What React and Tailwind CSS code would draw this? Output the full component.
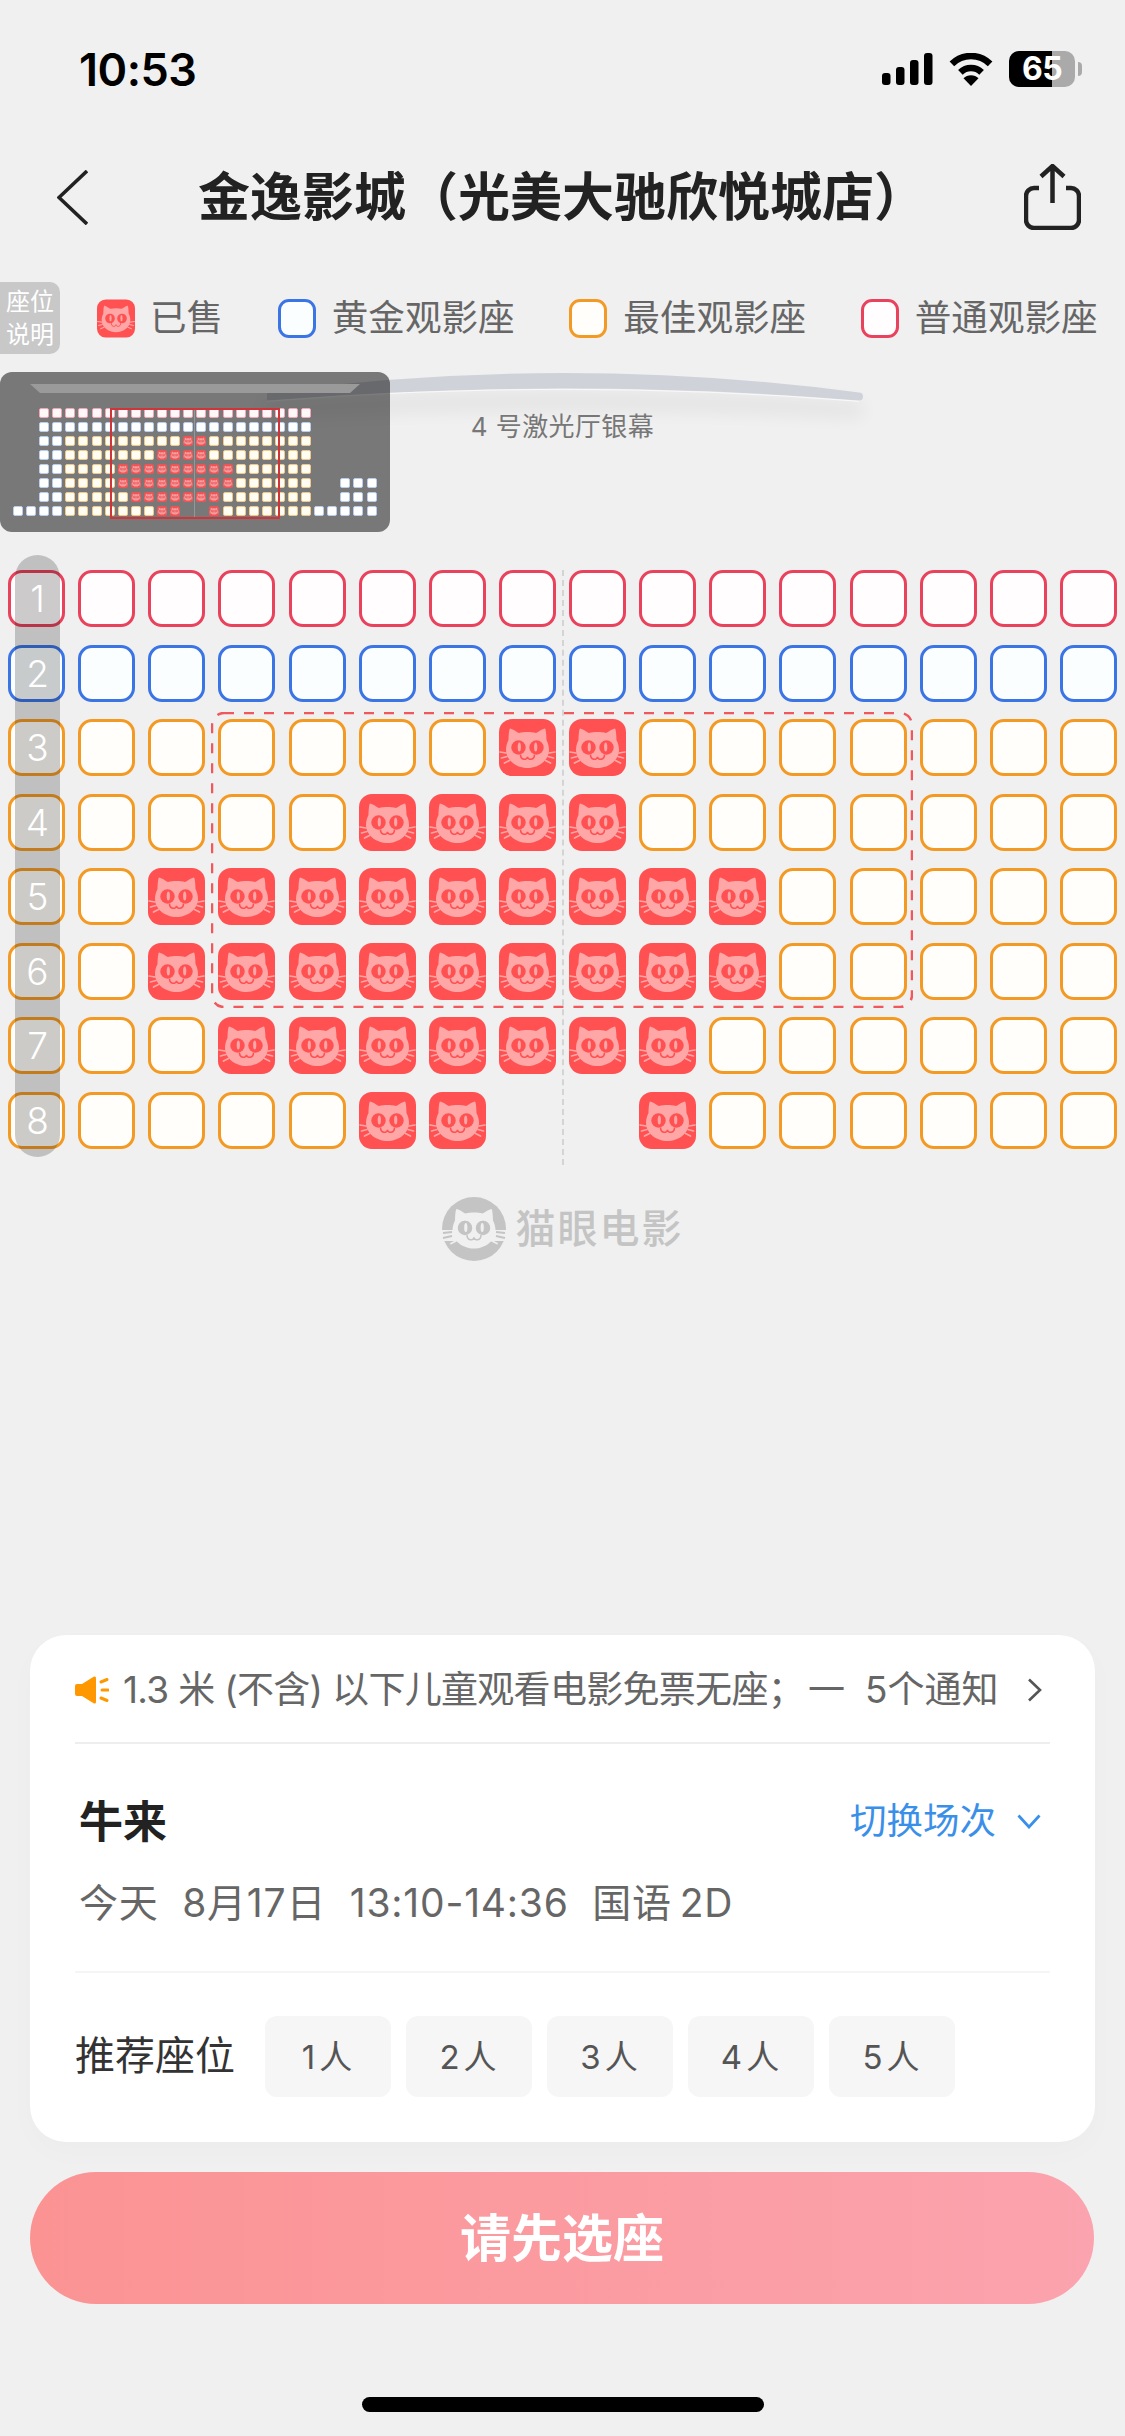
import React from "react";

const RED = "#ff5052";
const PINK = "#ffa6a6";

function CatFace({ face, line, bg }) {
  return (
    <>
      <path
        fill={face}
        d="M11 9.5C12 9 19 13.5 20 14C25 12.8 32 12.8 37 14C38 13.5 45 9 46 9.5C47 10 47.5 18 47.5 21C49 24 50 27 50 31C50 41 40 49 28.5 49C17 49 7 41 7 31C7 27 8 24 9.5 21C9.5 18 10 10 11 9.5Z"
      />
      <g stroke={face} strokeWidth="1.7" strokeLinecap="round" fill="none">
        <path d="M1 33L7 34M2.5 39L8 37.5M5.5 44L10.5 41.5M56 33L50 34M54.5 39L49 37.5M51.5 44L46.5 41.5" />
      </g>
      <circle cx="19.5" cy="28.5" r="7.2" fill={line} />
      <circle cx="37.5" cy="28.5" r="7.2" fill={line} />
      <ellipse cx="20.3" cy="28" rx="1.6" ry="4.6" fill={bg} />
      <ellipse cx="36.7" cy="28" rx="1.6" ry="4.6" fill={bg} />
      <path
        d="M21.5 35.5C21.5 41.5 28 41.5 28.5 37.8C29 41.5 35.5 41.5 35.5 35.5"
        stroke={line}
        strokeWidth="1.5"
        fill="none"
      />
    </>
  );
}

function Cat({ className }) {
  return (
    <svg viewBox="0 0 57 57" className={className}>
      <rect width="57" height="57" rx="13" fill={RED} />
      <CatFace face={PINK} line={RED} bg={PINK} />
    </svg>
  );
}

const SEAT_STYLE = {
  p: "border-[#e9425c] bg-[#fffdfd]",
  b: "border-[#3b74e4] bg-[#fbfeff]",
  o: "border-[#f39a25] bg-[#fffefb]",
};

const SOLD = {
  2: [7, 8],
  3: [5, 6, 7, 8],
  4: [2, 3, 4, 5, 6, 7, 8, 9, 10],
  5: [2, 3, 4, 5, 6, 7, 8, 9, 10],
  6: [3, 4, 5, 6, 7, 8, 9],
  7: [5, 6, 9],
};

function Seat({ row, col }) {
  if (row === 7 && (col === 7 || col === 8)) return <div className="h-[57px] w-[57px]" />;
  if ((SOLD[row] || []).includes(col)) return <Cat className="block h-[57px] w-[57px]" />;
  const kind = row === 0 ? "p" : row === 1 ? "b" : "o";
  return <div className={`h-[57px] w-[57px] rounded-[14px] border-[3px] ${SEAT_STYLE[kind]}`} />;
}

const MINI_STYLE = {
  p: "border-[#f2a6b6] bg-[#fff8f8]",
  b: "border-[#b9cdf0] bg-white",
  o: "border-[#f0c888] bg-[#fffcf4]",
};

function miniKind(r, c) {
  if (r <= 1) {
    if (c < 2 || c > 22) return null;
    return r === 0 ? "p" : "b";
  }
  if (r === 7) {
    if (c < 4 || c > 22) return "b";
    return "o";
  }
  if (c < 2) return null;
  if (c < 4) return "b";
  if (c <= 22) return "o";
  if (r >= 5 && c >= 25) return "b";
  return null;
}

function MiniSeat({ r, c }) {
  if (r === 7 && (c === 13 || c === 14)) return <div className="h-[10px] w-[10px]" />;
  if ((SOLD[r] || []).includes(c - 6)) return <Cat className="block h-[10px] w-[10px] opacity-90" />;
  const kind = miniKind(r, c);
  if (!kind) return <div className="h-[10px] w-[10px]" />;
  return <div className={`h-[10px] w-[10px] rounded-[2px] border ${MINI_STYLE[kind]}`} />;
}

const range = (n) => Array.from({ length: n }, (_, i) => i);

function StatusBar() {
  return (
    <div className="flex h-[138px] items-center justify-between pl-[79px] pr-[43px]">
      <span className="text-[45px] leading-none font-semibold tracking-[-0.5px] text-black">10:53</span>
      <div className="flex items-center">
        <svg viewBox="0 0 51 32" className="h-[32px] w-[51px]">
          <rect x="0" y="20" width="8.5" height="12" rx="3" />
          <rect x="14" y="14" width="8.5" height="18" rx="3" />
          <rect x="28" y="7" width="8.5" height="25" rx="3" />
          <rect x="42" y="0" width="8.5" height="32" rx="3" />
        </svg>
        <svg viewBox="0 0 46 33" className="ml-[15px] h-[33px] w-[46px]">
          <path d="M3.9 10.9A27 27 0 0 1 42.1 10.9M12.4 19.4A15 15 0 0 1 33.6 19.4" stroke="#000" strokeWidth="6.5" fill="none" />
          <path d="M23 33L15.5 25.3A10.5 10.5 0 0 1 30.5 25.3Z" />
        </svg>
        <div className="relative ml-[15px] h-[36px] w-[66px] rounded-[10px] bg-[#aaaaaa]">
          <div className="h-full w-[43px] rounded-l-[10px] bg-black" />
          <span className="absolute inset-0 flex items-center justify-center text-[32px] leading-none font-bold tracking-[-0.5px] text-white">65</span>
        </div>
        <div className="ml-[3px] h-[14px] w-[4px] rounded-r-[4px] bg-[#aaaaaa]" />
      </div>
    </div>
  );
}

function NavBar() {
  return (
    <div className="relative flex h-[118px] items-center pl-[57px] pr-[44px]">
      <svg viewBox="0 0 31 55" className="h-[55px] w-[31px]">
        <path d="M30 1L2 27.5L30 54" stroke="#222" strokeWidth="3.6" fill="none" />
      </svg>
      <h1 className="ml-[110px] w-[728px] pt-[2px] text-[52px] leading-none font-semibold whitespace-nowrap text-[#222]">金逸影城（光美大驰欣悦城店）</h1>
      <svg viewBox="0 0 57 66" className="ml-auto h-[66px] w-[57px]" fill="none" stroke="#222" strokeWidth="4.5">
        <path d="M15 24H10a8 8 0 0 0-8 8V56a8 8 0 0 0 8 8H47a8 8 0 0 0 8-8V32a8 8 0 0 0-8-8H42" />
        <path d="M28.5 39V3M17 12.5L28.5 2L40 12.5" />
      </svg>
    </div>
  );
}

function LegendItem({ swatch, label }) {
  return (
    <div className="flex items-center gap-[16px]">
      <div className={`h-[39px] w-[38px] rounded-[11px] border-[3px] ${swatch}`} />
      <span className="text-[36.6px] leading-none text-[#666]">{label}</span>
    </div>
  );
}

function Legend() {
  return (
    <div className="mt-[26px] flex h-[72px] items-center">
      <div className="flex h-[72px] w-[60px] flex-col items-center justify-center rounded-r-[10px] bg-[#c8c8c8] text-[24px] leading-[33px] text-white">
        <span>座位</span>
        <span>说明</span>
      </div>
      <div className="ml-[37px] flex items-center gap-[54.6px]">
        <div className="flex items-center gap-[15px]">
          <Cat className="block h-[39px] w-[38px]" />
          <span className="text-[36.6px] leading-none text-[#666]">已售</span>
        </div>
        <LegendItem swatch={SEAT_STYLE.b} label="黄金观影座" />
        <LegendItem swatch={SEAT_STYLE.o} label="最佳观影座" />
        <LegendItem swatch={SEAT_STYLE.p} label="普通观影座" />
      </div>
    </div>
  );
}

function MiniMap() {
  return (
    <div className="absolute left-0 top-[18px] h-[160px] w-[390px] rounded-[12px] bg-black/50 pl-[13px]">
      <svg viewBox="0 0 330 9" className="absolute left-[30px] top-[12px] h-[9px] w-[330px]">
        <path d="M0 0H330L320 9H10Z" fill="#9a9a9a" />
      </svg>
      <div className="grid grid-cols-[repeat(28,10px)] gap-x-[3.1px] gap-y-[4px] pt-[36px]">
        {range(8).map((r) => range(28).map((c) => <MiniSeat key={`${r}-${c}`} r={r} c={c} />))}
      </div>
      <div className="absolute left-[194px] top-[36px] h-[111px] w-px bg-[#8f9a9a]" />
      <div className="absolute left-[110px] top-[36px] h-[111px] w-[170px] border-[2.5px] border-[#d13438]" />
    </div>
  );
}

function Screen() {
  return (
    <div className="relative flex h-[216px] flex-col items-center pt-[18px]">
      <svg viewBox="-40 0 680 60" className="h-[60px] w-[680px]">
        <defs>
          <filter id="soft" x="-10%" y="-50%" width="120%" height="200%">
            <feGaussianBlur stdDeviation="9" />
          </filter>
        </defs>
        <path d="M0 30Q300 10 600 30V46Q300 30 0 46Z" fill="#000" opacity="0.05" filter="url(#soft)" />
        <path d="M4 20.5Q300 -18.5 596 20.5A4 4 0 0 1 596 28.5Q300 4.5 4 28.5Z" fill="#cfd2d9" />
        <path d="M4 29.3Q300 5.3 596 29.3" stroke="#fff" strokeOpacity="0.7" strokeWidth="1" fill="none" />
      </svg>
      <div className="-mt-[20px] text-[26px] leading-[30px] tracking-[0.4px] text-[#777]">4 号激光厅银幕</div>
      <MiniMap />
    </div>
  );
}

function Seats() {
  return (
    <div className="relative pl-[8px]">
      <div className="grid grid-cols-[repeat(16,57px)] gap-x-[13.13px] gap-y-[17.5px]">
        {range(8).map((r) => range(16).map((c) => <Seat key={`${r}-${c}`} row={r} col={c} />))}
      </div>
      <div className="absolute left-[562px] top-0 h-[595px] border-l-2 border-dashed border-[#d4d4d4]" />
      <svg className="absolute left-[211px] top-[142px] h-[296px] w-[702px]" viewBox="0 0 702 296" fill="none">
        <rect x="1" y="1" width="700" height="294" rx="12" stroke="#f0585c" strokeWidth="2.5" strokeDasharray="10 10" />
      </svg>
      <div className="absolute left-[15px] -top-[15px] h-[602px] w-[45px] rounded-full bg-black/20 pt-[15px]">
        <div className="grid grid-rows-[repeat(8,57px)] gap-y-[17.5px] text-[37px] font-light text-white">
          {range(8).map((i) => (
            <span key={i} className="flex items-center justify-center leading-none">{i + 1}</span>
          ))}
        </div>
      </div>
    </div>
  );
}

function Logo() {
  const c = "#c4c4c4";
  const bg = "#f0f0f0";
  return (
    <div className="mt-[48px] flex h-[64px] items-center justify-center">
      <svg viewBox="0 0 64 64" className="h-[64px] w-[64px]">
        <circle cx="32" cy="32" r="32" fill={c} />
        <g transform="translate(3.5 2.5)">
          <CatFace face={bg} line={c} bg={bg} />
        </g>
        <rect x="0" y="33" width="64" height="11" fill={bg} />
        <path d="M1 36L10 35M1 41L10 39M63 36L54 35M63 41L54 39" stroke={c} strokeWidth="2" />
        <circle cx="23" cy="31" r="7.2" fill={c} />
        <circle cx="41" cy="31" r="7.2" fill={c} />
        <ellipse cx="23.8" cy="30.5" rx="1.6" ry="4.6" fill={bg} />
        <ellipse cx="40.2" cy="30.5" rx="1.6" ry="4.6" fill={bg} />
        <path d="M25 38C25 44 31.5 44 32 40.3C32.5 44 39 44 39 38" stroke={c} strokeWidth="1.5" fill="none" />
      </svg>
      <span className="ml-[10px] text-[40px] leading-none font-medium tracking-[2px] text-[#c4c4c4]">猫眼电影</span>
    </div>
  );
}

function Card() {
  return (
    <div className="mx-[30px] mt-[374px] h-[507px] rounded-[36px] bg-white px-[45px] shadow-[0_10px_30px_rgba(0,0,0,0.02)]">
      <div className="flex h-[109px] items-center border-b-2 border-[#eeeeee] pt-[3px] text-[37px] leading-none text-[#666]">
        <svg viewBox="0 0 34 28" className="h-[28px] w-[34px] shrink-0">
          <path d="M0 10Q0 8 2 8H7L19 0.5Q21 0 21 2V26Q21 28 19 27.5L7 20H2Q0 20 0 18Z" fill="#ff9800" />
          <path d="M26 6L32 3.5M27 14H33M26 22L32 24.5" stroke="#ff9800" strokeWidth="3" strokeLinecap="round" />
        </svg>
        <span className="ml-[14px] w-[673px] whitespace-nowrap tracking-[-0.7px]">1.3 米 (不含) 以下儿童观看电影免票无座；</span>
        <span className="ml-[12px]">一</span>
        <span className="ml-[20px] whitespace-nowrap">5个通知</span>
        <svg viewBox="0 0 15 24" className="ml-auto mr-[8px] h-[24px] w-[15px]">
          <path d="M2 1.5L13 12L2 22.5" stroke="#555" strokeWidth="2.6" fill="none" />
        </svg>
      </div>
      <div className="h-[229px] border-b-2 border-[#f5f5f5] pl-[4px] pt-[48px]">
        <div className="flex h-[60px] items-center justify-between pr-[9px]">
          <span className="text-[44px] leading-none font-semibold text-[#222]">牛来</span>
          <div className="flex items-center">
            <span className="text-[36.5px] leading-none text-[#3a8fe8]">切换场次</span>
            <svg viewBox="0 0 24 15" className="ml-[21px] h-[15px] w-[24px]">
              <path d="M1.5 1.5L12 13L22.5 1.5" stroke="#3a8fe8" strokeWidth="2.8" fill="none" />
            </svg>
          </div>
        </div>
        <div className="mt-[31px] whitespace-pre text-[39px] leading-none tracking-[0.8px] text-[#666]">今天  8月17日  13:10-14:36  国语{"\u2009"}2D</div>
      </div>
      <div className="flex items-center pt-[43px]">
        <span className="text-[40px] leading-none text-[#333]">推荐座位</span>
        <div className="ml-[30px] flex gap-[15px]">
          {["1人", "2人", "3人", "4人", "5人"].map((t) => (
            <div key={t} className="flex h-[81px] w-[126px] items-center justify-center rounded-[12px] bg-[#f6f6f6] pt-[3px] pl-[2px] text-[33px] tracking-[4px] text-[#555]">
              {t}
            </div>
          ))}
        </div>
      </div>
    </div>
  );
}

export default function App() {
  return (
    <div className="h-[2436px] w-[1125px] overflow-hidden bg-[#f0f0f0] font-['Inter','Noto_Sans_CJK_SC',sans-serif]">
      <StatusBar />
      <NavBar />
      <Legend />
      <Screen />
      <Seats />
      <Logo />
      <Card />
      <button className="mx-[30px] mt-[30px] block h-[132px] w-[1064px] rounded-full bg-gradient-to-r from-[#fb9393] to-[#fba3ae] pt-[3px] text-[51px] font-semibold text-white">
        请先选座
      </button>
      <div className="mx-auto mt-[93px] h-[15px] w-[402px] rounded-full bg-black" />
    </div>
  );
}
